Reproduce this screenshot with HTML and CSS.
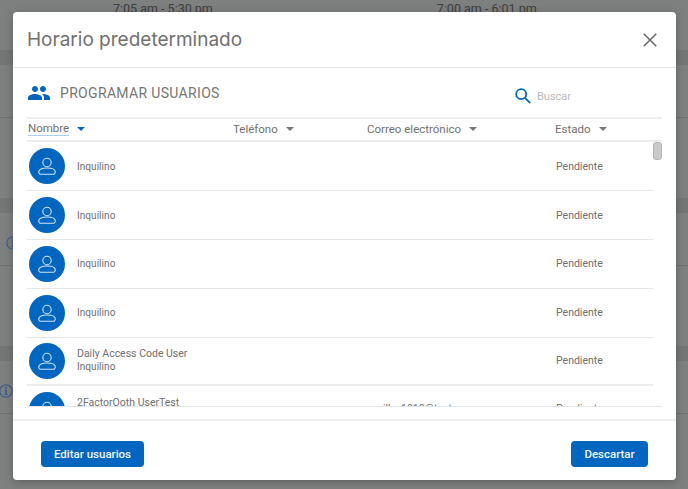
FILE: index.html
```html
<!DOCTYPE html>
<html lang="es">
<head>
<meta charset="utf-8">
<title>Horario predeterminado</title>
<link rel="stylesheet" href="styles.css">
</head>
<body>
<svg class="defs" width="0" height="0" aria-hidden="true">
  <symbol id="user" viewBox="0 0 36 36">
    <circle cx="18" cy="14.5" r="4.2" fill="none" stroke="#d3e3f5" stroke-width="1.1"/>
    <path d="M12 26.3h12a2.3 2.3 0 0 0 2.3-2.3c0-2.6-3.6-4-8.3-4s-8.300 1.400-8.300 4a2.300 2.300 0 0 0 2.300 2.300z" fill="none" stroke="#d3e3f5" stroke-width="1.1"/>
  </symbol>
  <symbol id="info" viewBox="0 0 14 14">
    <circle cx="7" cy="7" r="6.200" fill="none" stroke="#3b5f88" stroke-width="1.200"/>
    <circle cx="7" cy="3.800" r="1.100" fill="#3b5f88"/>
    <path d="M5.600 5.800h2.300v4.300h.8v1H5.400v-1h.9V6.800h-.7z" fill="#3b5f88"/>
  </symbol>
</svg>

<div class="page">
  <div class="page-head">
    <span class="time time-a">7:05 am - 5:30 pm</span>
    <span class="time time-b">7:00 am - 6:01 pm</span>
  </div>
  <div class="group">
    <div class="band"></div>
    <div class="group-body"></div>
  </div>
  <div class="group">
    <div class="band"></div>
    <div class="group-body"><svg class="info info-a"><use href="#info"/></svg></div>
  </div>
  <div class="group">
    <div class="band"></div>
    <div class="group-body"><svg class="info info-b"><use href="#info"/></svg></div>
  </div>
</div>

<div class="modal">
  <header class="modal-head">
    <h1 class="modal-title">Horario predeterminado</h1>
    <svg class="close" viewBox="0 0 14 14"><path d="M.7.700l12.600 12.600M13.300.700L.7 13.300" fill="none" stroke="#666" stroke-width="1.500"/></svg>
  </header>

  <div class="section">
    <div class="section-bar">
      <div class="section-name">
        <svg class="people" viewBox="0 0 24 24"><path fill="#0066c0" d="M16 11c1.660 0 2.990-1.340 2.990-3S17.660 5 16 5c-1.660 0-3 1.340-3 3s1.340 3 3 3zm-8 0c1.660 0 2.990-1.340 2.990-3S9.660 5 8 5C6.340 5 5 6.340 5 8s1.340 3 3 3zm0 2c-2.330 0-7 1.170-7 3.500V19h14v-2.500c0-2.330-4.670-3.500-7-3.500zm8 0c-.29 0-.62.020-.97.050 1.160.84 1.970 1.970 1.970 3.450V19h6v-2.500c0-2.330-4.670-3.500-7-3.500z"/></svg>
        <h2 class="section-title">PROGRAMAR USUARIOS</h2>
      </div>
      <div class="search">
        <svg class="search-icon" viewBox="0 0 16 16"><circle cx="6.200" cy="6.200" r="5" fill="none" stroke="#0066c0" stroke-width="1.800"/><path d="M9.900 9.900l5.400 5.300" fill="none" stroke="#0066c0" stroke-width="1.800"/></svg>
        <span class="search-text">Buscar</span>
      </div>
    </div>

    <div class="table-head">
      <div class="th th-active"><span class="th-label">Nombre</span><i class="caret caret-blue"></i></div>
      <div class="th"><span>Teléfono</span><i class="caret"></i></div>
      <div class="th"><span>Correo electrónico</span><i class="caret"></i></div>
      <div class="th"><span>Estado</span><i class="caret"></i></div>
    </div>

    <div class="table-body">
      <div class="rows">
        <div class="row">
          <div class="who"><div class="avatar"><svg class="avatar-icon"><use href="#user"/></svg></div><div class="names"><span class="role">Inquilino</span></div></div>
          <div></div><div></div><div class="status">Pendiente</div>
        </div>
        <div class="row">
          <div class="who"><div class="avatar"><svg class="avatar-icon"><use href="#user"/></svg></div><div class="names"><span class="role">Inquilino</span></div></div>
          <div></div><div></div><div class="status">Pendiente</div>
        </div>
        <div class="row">
          <div class="who"><div class="avatar"><svg class="avatar-icon"><use href="#user"/></svg></div><div class="names"><span class="role">Inquilino</span></div></div>
          <div></div><div></div><div class="status">Pendiente</div>
        </div>
        <div class="row">
          <div class="who"><div class="avatar"><svg class="avatar-icon"><use href="#user"/></svg></div><div class="names"><span class="role">Inquilino</span></div></div>
          <div></div><div></div><div class="status">Pendiente</div>
        </div>
        <div class="row row-thick row-two">
          <div class="who"><div class="avatar"><svg class="avatar-icon"><use href="#user"/></svg></div><div class="names"><span class="name-main">Daily Access Code User</span><span class="role">Inquilino</span></div></div>
          <div></div><div></div><div class="status">Pendiente</div>
        </div>
        <div class="row row-two row-last">
          <div class="who"><div class="avatar"><svg class="avatar-icon"><use href="#user"/></svg></div><div class="names"><span class="name-main">2FactorOoth UserTest</span><span class="role">Inquilino</span></div></div>
          <div></div><div class="email">mailby.1010@test.com</div><div class="status">Pendiente</div>
        </div>
      </div>
      <div class="scroll-thumb"></div>
    </div>
  </div>

  <footer class="modal-foot">
    <button class="btn btn-edit" type="button">Editar usuarios</button>
    <button class="btn btn-close" type="button">Descartar</button>
  </footer>
</div>
</body>
</html>
```

FILE: styles.css
```css
* { box-sizing: border-box; }
html, body { margin: 0; padding: 0; height: 100%; overflow: hidden; }
body { background: #7e7f7f; font-family: Roboto, "Liberation Sans", sans-serif; color: #6a6a6a; }
.defs { display: block; height: 0; }

/* Dimmed page behind the dialog */
.page { height: 489px; }
.page-head { height: 50px; display: flex; padding-top: 1px; }
.time { font-size: 12.500px; line-height: 16px; color: #3d3d3d; }
.time-a { margin-left: 113px; }
.time-b { margin-left: 224px; }
.group { height: 148px; }
.band { height: 15px; background: #747676; }
.group-body { height: 53px; border-bottom: 1px solid #6f7070; padding-top: 23px; }
.info { display: block; width: 14px; height: 14px; }
.info-a { margin-left: 6px; }
.info-b { margin-left: -1px; }

/* Dialog */
.modal {
  position: absolute; left: 13px; top: 12px; width: 663px; height: 468px;
  background: #fff; border-radius: 4px;
  box-shadow: 0 2px 8px rgba(0, 0, 0, .25);
  display: flex; flex-direction: column;
}
.modal-head {
  height: 56px; flex: none; border-bottom: 1px solid #e3e6e8;
  display: flex; align-items: center; justify-content: space-between;
  padding: 0 19px 0 14px;
}
.modal-title { margin: 0; font-family: Inter, sans-serif; font-weight: 400; font-size: 19px; color: #707070; }
.close { width: 14px; height: 14px; display: block; }

.section { flex: 1; padding: 0 14px; min-height: 0; }
.section-bar { height: 49px; display: flex; justify-content: space-between; }
.section-name { display: flex; align-items: center; height: 49px; }
.people { width: 24px; height: 24px; display: block; }
.section-title { margin: 0 0 0 9px; font-size: 14px; font-weight: 400; color: #757575; letter-spacing: .33px; }
.search { width: 149px; display: flex; align-items: center; height: 56px; padding-left: 2px; }
.search-icon { width: 16px; height: 16px; display: block; }
.search-text { margin-left: 6px; font-size: 11px; color: #b9b9b9; }

.table-head, .row { display: grid; grid-template-columns: 205px 134px 188px 1fr; }
.table-head {
  height: 25px; border-top: 2px solid #ececec; border-bottom: 2px solid #ececec;
  padding: 0 0 2px 1px; align-items: center;
}
.th { display: flex; align-items: center; font-size: 11.500px; color: #6f6f6f; }
.th-label { border-bottom: 1px solid #a9cff1; line-height: 13px; }
.caret { display: block; margin-left: 8px; width: 0; height: 0; border: 4px solid transparent; border-bottom: 0; border-top-color: #757575; }
.caret-blue { border-top-color: #0066c0; }

.table-body { height: 265px; border-bottom: 1px solid #e3e6e8; overflow: hidden; display: flex; }
.rows { width: 626px; flex: none; padding-top: .5px; }
.row { height: 48.750px; border-bottom: 1px solid #e3e6e8; align-items: center; padding-left: 1px; }
.row-thick { border-bottom: 2px solid #ececec; }
.who { display: flex; align-items: center; }
.avatar { width: 36px; height: 36px; border-radius: 50%; background: #0066c0; margin-left: 1px; flex: none; }
.avatar-icon { width: 36px; height: 36px; display: block; }
.names { margin-left: 12px; display: flex; flex-direction: column; line-height: 13px; color: #6e6e6e; white-space: nowrap; }
.row-two .names { margin-bottom: 2px; }
.role { font-size: 10px; letter-spacing: .05px; }
.name-main { font-size: 10.500px; }
.status { font-size: 10.500px; color: #6e6e6e; padding-left: 1px; }
.email { font-size: 10.500px; color: #6e6e6e; padding-left: 1px; }
.row-last .status, .row-last .email { margin-bottom: 3px; }
.scroll-thumb { width: 9px; height: 18px; background: #c9c9c9; border: 1px solid #b5b5b5; border-radius: 3px; flex: none; }

.modal-foot {
  height: 61px; flex: none; border-top: 2px solid #ececec;
  display: flex; justify-content: space-between; align-items: flex-start;
  padding: 20px 28px 0 28px;
}
.btn {
  height: 26px; border: 0; border-radius: 4px; background: #0066c0; color: #f2f6fb;
  font-family: Roboto, sans-serif; font-size: 11.500px; font-weight: 500; padding: 0;
}
.btn-edit { width: 103px; }
.btn-close { width: 77px; }
```
